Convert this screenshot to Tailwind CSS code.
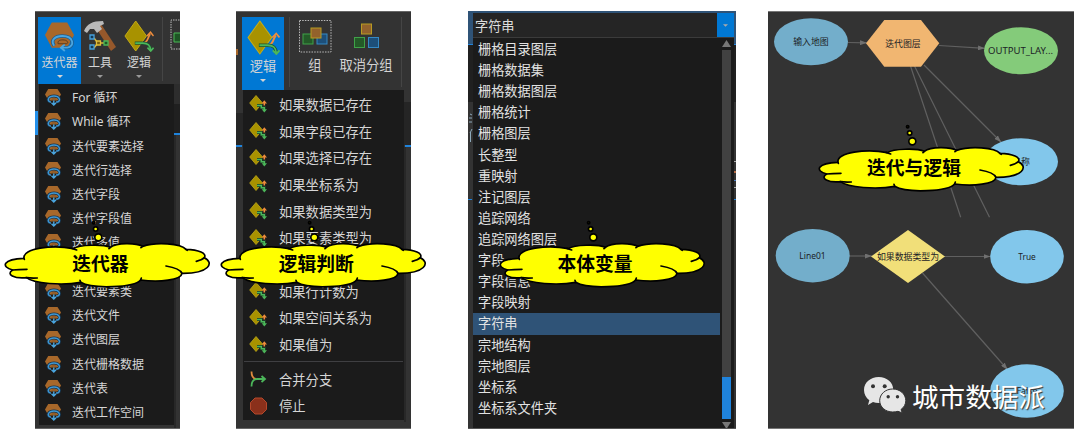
<!DOCTYPE html>
<html lang="zh-CN">
<head>
  <meta charset="UTF-8" />
  <meta name="viewport" content="width=device-width, initial-scale=1.0"/>
  <title>迭代与逻辑</title>
  <script src="https://cdn.jsdelivr.net/npm/@tailwindcss/browser@4"></script>
</head>
<body class="bg-white font-['Noto_Sans','Noto_Sans_CJK_SC',sans-serif]">

  <!-- Shared icons -->
  <svg class="hidden">
    <symbol id="iter-big" viewBox="0 0 32 32">
      <path d="M1 15L8 2H24L31 15L24 28H8Z" fill="#a9682a"/>
      <path d="M10.500 26C6.500 20.500 11 16 19 16C31 16 32 27 24 28H18" fill="none" stroke="#1b5f93" stroke-width="3.600"/>
      <path d="M10.500 26C6.500 20.500 11 16 19 16C31 16 32 27 24 28H18M21.500 24.500L17.500 28L21.500 31.500" fill="none" stroke="#4aa6e0" stroke-width="1.900"/>
      <path d="M14.500 24C14 21 16 20 19.500 20C25 20 25.500 24 23 24Z" fill="#a9682a" stroke="#5b3c1e" stroke-width="1"/>
    </symbol>
    <symbol id="iter" viewBox="0 0 18 18">
      <path d="M1 6.500L4.200 1H13.500L17 6.500L13.500 12.500H4.500Z" fill="#a8682a"/>
      <path d="M5.500 14C2.500 11.500 4.500 8 10 8C15.500 8 17 12 14 14.200" fill="none" stroke="#16344c" stroke-width="2.800"/>
      <path d="M7 14H6C2.500 12 4.500 8 10 8C15.800 8 17 13 13.500 14H12" fill="none" stroke="#3f97d3" stroke-width="1.400"/>
      <path d="M7.500 11.500Q10 10 12.500 11.500" fill="none" stroke="#8d5a28" stroke-width="1.300"/>
      <path d="M9.800 12.500V17M7.500 14.800L9.800 17L12 14.800" fill="none" stroke="#4aa6e0" stroke-width="1.400"/>
    </symbol>
    <symbol id="logic-big" viewBox="0 0 32 34">
      <path d="M12.500 1L24 17L12.500 33L1 17Z" fill="#a89200" stroke="#c7ad16" stroke-width="1"/>
      <path d="M12 24.500H20C26 24.500 25 18 28 15" fill="none" stroke="#f08d3c" stroke-width="1.900"/>
      <path d="M24.500 17L28.300 13L31.500 17" fill="none" stroke="#f08d3c" stroke-width="1.600"/>
      <path d="M11.500 24.500H20C26 24.500 28 27 28.500 32.500" fill="none" stroke="#1f5030" stroke-width="3.400"/>
      <path d="M12 24.500H20C26 24.500 28 27 28.500 32.500M25 29.500L28.500 33L31.500 29.500" fill="none" stroke="#4cb75a" stroke-width="1.800"/>
    </symbol>
    <symbol id="logic" viewBox="0 0 19 18">
      <path d="M7 .5L13.500 8L7 15.500L.7 8Z" fill="#a89200" stroke="#c0a818" stroke-width=".8"/>
      <path d="M8 10.500H12.500V12.500H15.500V15" fill="none" stroke="#1d3a26" stroke-width="3"/>
      <path d="M15.300 10.500V7" fill="none" stroke="#f08d3c" stroke-width="1.600"/>
      <path d="M12.700 8.500L15.300 5.200L18 8.500Z" fill="#f08d3c"/>
      <path d="M8 10.500H12.300V12.700H15.300V15" fill="none" stroke="#4cb75a" stroke-width="1.400"/>
      <path d="M12.700 14.300L15.300 17.600L18 14.300Z" fill="#4cb75a"/>
    </symbol>
    <symbol id="merge" viewBox="0 0 19 18">
      <path d="M2.500 1.500C2.500 6 4 8.500 7 9" fill="none" stroke="#e08a3c" stroke-width="1.800"/>
      <path d="M2.500 16.500C2.500 11.500 5 9 8 9H15.500M12.500 6L16 9L12.500 12" fill="none" stroke="#4cb75a" stroke-width="1.800"/>
    </symbol>
    <symbol id="stop" viewBox="0 0 19 18">
      <path d="M6 1H13L17.500 5.500V12.500L13 17H6L1.500 12.500V5.500Z" fill="#8a301b" stroke="#b5482b"/>
    </symbol>
    <symbol id="caret" viewBox="0 0 6 3">
      <path d="M0 0H6L3 3Z" fill="currentColor"/>
    </symbol>
    <!-- thought bubble outline -->
    <symbol id="cloud" viewBox="165 10 640 215">
      <g fill="#ff0" stroke="#000" stroke-width="5" stroke-linecap="round" stroke-linejoin="round">
        <circle cx="443" cy="21" r="3.500" fill="#330"/>
        <circle cx="449" cy="40" r="6.500"/>
        <circle cx="457" cy="65" r="10.500"/>
        <path d="M234 128C228 98 320 86 382 99C400 87 470 85 493 95C512 80 570 81 590 92C630 78 705 83 720 101C758 102 784 113 775 126C806 141 790 174 708 173C706 193 640 201 584 193C565 216 440 221 404 200C350 210 262 204 242 186C205 190 178 176 200 163C164 154 170 130 234 128Z"/>
        <path d="M234 128L235 131M378 98L392 103M493 95L489 99M590 92L585 96M720 101L724 104M775 126Q768 133 751 137M708 173Q702 158 660 151M584 193L586 187M404 200L402 194M242 186Q256 188 274 187M200 163Q218 161 243 161" fill="none"/>
      </g>
    </symbol>
  </svg>

  <main class="relative flex h-[445px] w-[1080px] items-start overflow-hidden pt-[11px]">

    <!-- Iterators -->
    <section class="ml-[35px] flex h-[418px] w-[145px] flex-col overflow-hidden border-t border-b border-[#666] bg-[#333]">
      <div class="flex h-[72px] shrink-0 pt-[5px] pl-[3px] text-xs text-[#d4d4d4]">
        <div class="flex h-[67px] w-[43px] shrink-0 flex-col items-center bg-[#0078d4] pt-[3px]">
          <svg class="h-[32px] w-[31px]"><use href="#iter-big"/></svg>
          <span class="mt-[2px] leading-[18px]">迭代器</span>
          <svg class="mt-[3px] h-[3px] w-[6px]"><use href="#caret"/></svg>
        </div>
        <div class="flex w-[38px] shrink-0 flex-col items-center pt-[3px]">
          <svg class="h-[32px] w-[34px]" viewBox="0 0 34 32">
            <path d="M13 8L18 4L33 27L28 31Z" fill="#96582b"/>
            <path d="M1 11C4 4 9 1 20 1L21 4L17 6L19 9L14 13L11 9L7 9L4 13Z" fill="#b9b9b9"/>
            <path d="M11 18L14 22M11 28L14 24M18 23H21" stroke="#d5b43a" stroke-width="1.500"/>
            <path d="M7 15H11V19H7ZM7 25H11V29H7Z" fill="#153a55" stroke="#46a0dc" stroke-width="1.300"/>
            <path d="M13.500 21H17.500V25H13.500Z" fill="#775d10" stroke="#e1bd39" stroke-width="1.300"/>
            <path d="M21 21H25V25H21Z" fill="#1e5525" stroke="#4bb756" stroke-width="1.300"/>
          </svg>
          <span class="mt-[2px] leading-[18px]">工具</span>
          <svg class="mt-[3px] h-[3px] w-[6px] text-[#999]"><use href="#caret"/></svg>
        </div>
        <div class="flex w-[40px] shrink-0 flex-col items-center pt-[3px]">
          <svg class="h-[32px] w-[30px]"><use href="#logic-big"/></svg>
          <span class="mt-[2px] leading-[18px]">逻辑</span>
          <svg class="mt-[3px] h-[3px] w-[6px] text-[#999]"><use href="#caret"/></svg>
        </div>
        <div class="ml-[3px] h-[64px] w-px shrink-0 bg-[#454545]"></div>
        <svg class="mt-[2px] ml-[7px] h-[32px] w-[12px] shrink-0" viewBox="0 0 12 32">
          <path d="M12 1H1V30H12" fill="none" stroke="#bbb" stroke-dasharray="1.500 1"/>
          <path d="M12 14H4V23H12" fill="#1e5525" stroke="#4bb756"/>
        </svg>
      </div>
      <div class="flex h-[345px]">
        <div class="w-[4px] pt-[27px]"><div class="h-[24px] w-[3px] bg-[#2490ea]"></div></div>
        <ul id="iterators" class="h-[341px] w-[135px] bg-[#1b1b1b] pt-[1px]"></ul>
        <div class="w-[6px]">
          <div class="h-[20px] bg-[#2d2d2d]"></div>
          <div class="h-[29px] bg-[#202020]"></div>
          <div class="h-[2px] bg-[#1f83dc]"></div>
          <div class="h-[294px] border-l-2 border-[#282828] bg-[#333]"></div>
        </div>
      </div>
    </section>

    <!-- Logic -->
    <section class="ml-[56px] flex h-[418px] w-[175px] flex-col overflow-hidden border-t border-b border-[#666] bg-[#333]">
      <div class="flex h-[78px] shrink-0 pt-[5px] text-[13.3px] text-[#d4d4d4]">
        <div class="w-[6px] shrink-0 pt-[32px]"><div class="h-[6px] w-[2px] bg-[#a9682a]"></div></div>
        <div class="flex h-[73px] w-[42px] shrink-0 flex-col items-center bg-[#0078d4] pt-[3px]">
          <svg class="h-[35px] w-[33px]"><use href="#logic-big"/></svg>
          <span class="mt-[1px] leading-[20px]">逻辑</span>
          <svg class="mt-[3px] h-[3px] w-[6px]"><use href="#caret"/></svg>
        </div>
        <div class="ml-[5px] h-[70px] w-px shrink-0 bg-[#454545]"></div>
        <div class="ml-[9px] flex w-[32px] shrink-0 flex-col items-center pt-[3px]">
          <svg class="h-[33px] w-[33px]" viewBox="0 0 33 33">
            <rect x=".5" y=".5" width="31.500" height="31.500" fill="none" stroke="#bbb" stroke-dasharray="1.500 1.200"/>
            <rect x="4" y="14" width="10" height="10" fill="#245a28" stroke="#3fa248"/>
            <rect x="18" y="14" width="10" height="10" fill="#1d4f79" stroke="#3489c4"/>
            <rect x="12" y="8" width="10" height="10" fill="#93622c" stroke="#b89b22"/>
          </svg>
          <span class="mt-[2px] leading-[20px]">组</span>
        </div>
        <div class="ml-[8px] flex w-[54px] shrink-0 flex-col items-center pt-[3px]">
          <svg class="h-[33px] w-[33px]" viewBox="0 0 33 33">
            <rect x="11.500" y="4" width="10" height="10" fill="#93622c" stroke="#b89b22"/>
            <rect x="4.500" y="17.500" width="10" height="10" fill="#245a28" stroke="#3fa248"/>
            <rect x="18.500" y="17.500" width="10" height="10" fill="#1d4f79" stroke="#3489c4"/>
          </svg>
          <span class="mt-[2px] leading-[20px] whitespace-nowrap">取消分组</span>
        </div>
        <div class="ml-[8px] h-[70px] w-px shrink-0 bg-[#454545]"></div>
      </div>
      <div class="flex h-[338px]">
        <div class="w-[7px]">
          <div class="h-[23px]"></div>
          <div class="h-[32px] bg-[#262626]"></div>
          <div class="h-[2px] w-[6px] bg-[#1f83dc]"></div>
        </div>
        <div class="h-[330px] w-[161px] bg-[#1b1b1b] pt-[1px]">
          <ul id="conditions"></ul>
          <div class="mx-px mt-[3px] mb-[4px] h-px bg-[#3f3f42]"></div>
          <ul id="branches"></ul>
        </div>
        <div class="w-[7px]">
          <div class="h-[12px]"></div>
          <div class="h-[43px] bg-[#252525]"></div>
          <div class="ml-px h-[2px] bg-[#1f83dc]"></div>
          <div class="h-[275px] border-l-2 border-[#282828]"></div>
        </div>
      </div>
    </section>

    <!-- Variable type dropdown -->
    <section class="ml-[57px] flex h-[418px] w-[268px] overflow-hidden border-b border-[#555] bg-[#333]">
      <div class="w-[5px]">
        <div class="h-[33px] bg-[#2f5377]"></div>
        <div class="h-px bg-[#1f83dc]"></div>
        <div class="h-[57px] bg-[#202020]"></div>
        <svg class="mt-[10px] h-[30px] w-[5px]" viewBox="0 0 5 30">
          <path d="M2 2L4 3M1 6H4M1 10H4M4 17L2 21M2.500 20V30" fill="none" stroke="#8da9bb" stroke-width="1"/>
        </svg>
        <div class="mt-[57px] h-px w-[4px] bg-[#1f83dc]"></div>
      </div>
      <div class="w-[261px]">
        <div class="flex h-[27px] border-t-2 border-b border-t-[#2f5377] border-b-[#3b3b3b]">
          <div class="w-[244px] bg-[#252525] pt-px pl-[2px] text-[13.2px] leading-[25px] text-[#ddd]">字符串</div>
          <div class="flex w-[17px] items-center justify-center bg-[#0078d4] text-[#aaa]">
            <svg class="h-[3px] w-[5px]"><use href="#caret"/></svg>
          </div>
        </div>
        <div class="flex h-[391px] bg-[#1b1b1b]">
          <ul id="types" class="w-[247px] pt-px"></ul>
          <div class="ml-[2px] flex w-[9px] flex-col items-center pt-[2px]">
            <svg class="h-[7px] w-[9px] shrink-0" viewBox="0 0 9 7"><path d="M0 7H9L4.500 0Z" fill="#777"/></svg>
            <div class="mt-[3px] h-[327px] w-[9px] shrink-0 bg-[#414141]"></div>
            <div class="h-[42px] w-[9px] shrink-0 bg-[#1f83dc]"></div>
            <svg class="mt-[3px] h-[7px] w-[9px] shrink-0" viewBox="0 0 9 7"><path d="M0 0H9L4.500 7Z" fill="#777"/></svg>
          </div>
        </div>
      </div>
      <div class="w-[2px]">
        <div class="h-[33px] bg-[#2f5377]"></div>
        <div class="h-px bg-[#1f83dc]"></div>
        <div class="h-[57px] bg-[#202020]"></div>
        <div class="mt-[59px] h-px bg-[#aaa]"></div>
        <div class="mt-[9px] h-[2px] bg-[#b26a45]"></div>
        <div class="mt-[7px] h-px bg-[#4b7cc0]"></div>
        <div class="mt-[6px] h-px bg-[#aaa]"></div>
        <div class="mt-[11px] h-px bg-[#1f83dc]"></div>
      </div>
    </section>

    <!-- Model canvas -->
    <section class="ml-[32px] h-[418px] w-[306px] border-t border-b border-[#777] bg-[#333]">
      <svg class="block h-[416px] w-[306px]" viewBox="768 12 306 416" text-anchor="middle" font-size="8.9">
        <defs>
          <marker id="arrow" viewBox="0 0 7 5" refX="7" refY="2.500" markerWidth="7" markerHeight="5" markerUnits="userSpaceOnUse" orient="auto">
            <path d="M0 0L7 2.500L0 5Z" fill="#707070"/>
          </marker>
        </defs>
        <g stroke="#606060" stroke-width="1.200" fill="none">
          <path d="M848 42.500L867 42.800" marker-end="url(#arrow)"/>
          <path d="M939 45.500L985 48.300" marker-end="url(#arrow)"/>
          <path d="M924 65L1001 142" marker-end="url(#arrow)"/>
          <path d="M910.500 66L960.700 217.300M914.500 66L989.500 217.300"/>
          <path d="M849 256H872" marker-end="url(#arrow)"/>
          <path d="M944 256.500H990.500" marker-end="url(#arrow)"/>
          <path d="M922.500 273L1007.500 369.500" marker-end="url(#arrow)"/>
        </g>
        <ellipse cx="811" cy="41.700" rx="37" ry="23.500" fill="#73aecb"/>
        <path d="M866 43.300L884.300 20H921L939.300 43.300L921 66.700H884.300Z" fill="#f1b671"/>
        <ellipse cx="1021" cy="50.700" rx="37" ry="23.500" fill="#84cb7a"/>
        <ellipse cx="1021" cy="161.700" rx="37" ry="23.500" fill="#82c7eb"/>
        <ellipse cx="812.700" cy="255.700" rx="37" ry="26.700" fill="#73aecb"/>
        <path d="M871 256.500L908 230L945 256.500L908 283Z" fill="#f1df79"/>
        <ellipse cx="1027" cy="256.700" rx="36.800" ry="26.700" fill="#82c7eb"/>
        <ellipse cx="1027" cy="391" rx="36.800" ry="26.700" fill="#82c7eb"/>
        <g fill="#1c2226">
          <text x="811" y="45.300">输入地图</text>
          <text x="903" y="46.800">迭代图层</text>
          <text x="1020.500" y="54" font-size="9.500" textLength="65" lengthAdjust="spacingAndGlyphs">OUTPUT_LAY...</text>
          <text x="1021" y="165.300">名称</text>
          <text x="812.500" y="259.300" font-size="9.500" textLength="26.500" lengthAdjust="spacingAndGlyphs">Line01</text>
          <text x="908" y="260">如果数据类型为</text>
          <text x="1027" y="260" font-size="9.500" textLength="17.500" lengthAdjust="spacingAndGlyphs">True</text>
          <text x="1027" y="394" font-size="9.500" textLength="21" lengthAdjust="spacingAndGlyphs">False</text>
        </g>
        <!-- account signature -->
        <g fill="#e6e6e6">
          <path d="M878.700 377C887 377 893.300 382.500 893.300 390C893.300 397.500 887 403 878.700 403Q875.500 403 873 402L868 405L869.300 400.300C866 398 864 394 864 390C864 382.500 870.500 377 878.700 377Z"/>
          <path d="M892.700 389C900 389 905.800 394 905.800 400.700C905.800 404 904 407.500 901 409.500L902.300 413L898 411.300Q895.500 412 892.700 412C885.500 412 879.700 407 879.700 400.700C879.700 394 885.500 389 892.700 389Z" stroke="#333" stroke-width="1"/>
        </g>
        <g fill="#333">
          <circle cx="873" cy="386.300" r="2"/><circle cx="884.700" cy="386.300" r="2"/>
          <circle cx="888.200" cy="396.800" r="1.700"/><circle cx="897.500" cy="396.800" r="1.700"/>
        </g>
        <text class="[text-shadow:1px_1px_1px_#333]" x="978.500" y="406.500" font-size="26.600" fill="#fff">城市数据派</text>
      </svg>
    </section>

    <!-- Callouts -->
    <div class="absolute top-[219px] left-[0.5px] h-[71.700px] w-[213.300px]">
      <svg class="h-full w-full"><use href="#cloud"/><text x="99.300" y="51.700" text-anchor="middle" font-size="18.800" font-weight="700">迭代器</text></svg>
    </div>
    <div class="absolute top-[218.700px] left-[217px] h-[71.700px] w-[213.300px]">
      <svg class="h-full w-full"><use href="#cloud"/><text x="99.200" y="52" text-anchor="middle" font-size="18.800" font-weight="700">逻辑判断</text></svg>
    </div>
    <div class="absolute top-[218.700px] left-[495.500px] h-[71.700px] w-[213.300px]">
      <svg class="h-full w-full"><use href="#cloud"/><text x="99" y="52" text-anchor="middle" font-size="18.800" font-weight="700">本体变量</text></svg>
    </div>
    <div class="absolute top-[123.300px] left-[814.700px] h-[71.700px] w-[213.300px]">
      <svg class="h-full w-full"><use href="#cloud"/><text x="99" y="52" text-anchor="middle" font-size="18.800" font-weight="700">迭代与逻辑</text></svg>
    </div>
  </main>

  <script>
    // an empty name keeps the row free behind a callout
    const iterators = [
      "For 循环", "While 循环", "迭代要素选择", "迭代行选择", "迭代字段", "迭代字段值", "迭代多值",
      "", "迭代要素类", "迭代文件", "迭代图层", "迭代栅格数据", "迭代表", "迭代工作空间"
    ];
    const conditions = [
      "如果数据已存在", "如果字段已存在", "如果选择已存在", "如果坐标系为", "如果数据类型为",
      "如果要素类型为", "", "如果行计数为", "如果空间关系为", "如果值为"
    ];
    const branches = [["merge", "合并分支"], ["stop", "停止"]];
    const types = [
      "栅格目录图层", "栅格数据集", "栅格数据图层", "栅格统计", "栅格图层", "长整型", "重映射", "注记图层", "追踪网络",
      "追踪网络图层", "字段", "字段信息", "字段映射", "字符串", "宗地结构", "宗地图层", "坐标系", "坐标系文件夹"
    ];

    document.getElementById("iterators").innerHTML = iterators.map(name => `
      <li class="flex h-[24.230px] items-center gap-[10px] pl-[5px] text-xs text-[#d6d6d6]">
        <svg class="h-[18px] w-[18px]"><use href="#iter"/></svg><span class="pt-[2px]">${name}</span>
      </li>`).join("");

    const logicRow = (icon, name) => `
      <li class="flex h-[26.700px] items-center gap-[11px] pl-[6px] text-[13.300px] text-[#d6d6d6]">
        <svg class="h-[18px] w-[19px]"><use href="#${icon}"/></svg><span class="pt-[3px]">${name}</span>
      </li>`;
    document.getElementById("conditions").innerHTML = conditions.map(name => logicRow("logic", name)).join("");
    document.getElementById("branches").innerHTML = branches.map(([icon, name]) => logicRow(icon, name)).join("");

    document.getElementById("types").innerHTML = types.map(name => `
      <li class="h-[21.120px] pl-[5px] text-[13.200px] leading-[21px] text-[#e2e2e2] ${name === "字符串" ? "bg-[#2f5377]" : ""}">${name}</li>`).join("");
  </script>
</body>
</html>
